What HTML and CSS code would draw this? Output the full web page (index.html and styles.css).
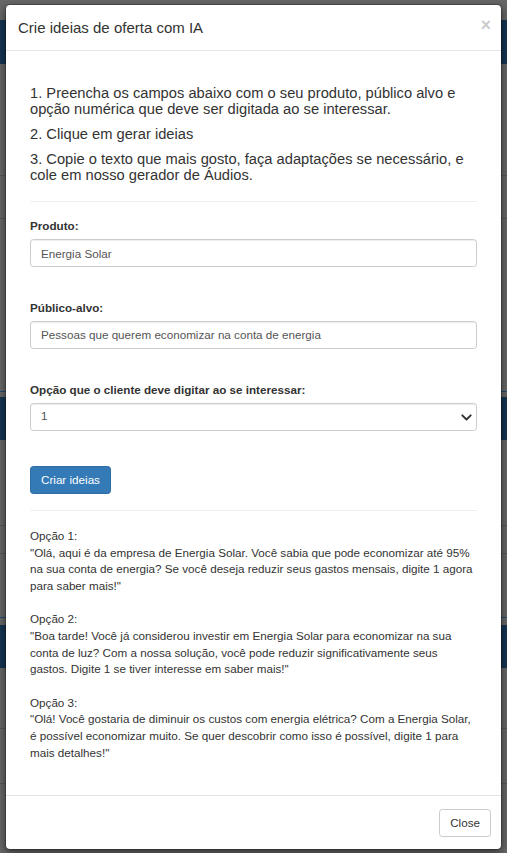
FILE: index.html
```html
<!DOCTYPE html>
<html lang="pt-BR">
<head>
<meta charset="utf-8">
<title>Crie ideias de oferta com IA</title>
<link rel="stylesheet" href="styles.css">
</head>
<body>
<div class="modal">
  <div class="modal-header">
    <h4 class="modal-title">Crie ideias de oferta com IA</h4>
    <button class="close" type="button">&times;</button>
  </div>
  <div class="modal-body">
    <h4 class="step">1. Preencha os campos abaixo com o seu produto, público alvo e opção numérica que deve ser digitada ao se interessar.</h4>
    <h4 class="step">2. Clique em gerar ideias</h4>
    <h4 class="step">3. Copie o texto que mais gosto, faça adaptações se necessário, e cole em nosso gerador de Áudios.</h4>
    <hr class="sep">
    <div class="form-group">
      <label class="label">Produto:</label>
      <input class="control" type="text" value="Energia Solar">
    </div>
    <div class="form-group">
      <label class="label">Público-alvo:</label>
      <input class="control" type="text" value="Pessoas que querem economizar na conta de energia">
    </div>
    <div class="form-group last">
      <label class="label">Opção que o cliente deve digitar ao se interessar:</label>
      <div class="select-wrap">
        <select class="control select">
          <option>1</option>
          <option>2</option>
          <option>3</option>
        </select>
        <svg class="chevron" width="11" height="7" viewBox="0 0 11 7"><path d="M1.3 1.3 L5.5 5.5 L9.7 1.3" fill="none" stroke="#333" stroke-width="1.9" stroke-linecap="round" stroke-linejoin="round"/></svg>
      </div>
    </div>
    <button class="btn btn-primary" type="button">Criar ideias</button>
    <hr class="sep">
    <div class="ideas">Opção 1:<br>"Olá, aqui é da empresa de Energia Solar. Você sabia que pode economizar até 95% na sua conta de energia? Se você deseja reduzir seus gastos mensais, digite 1 agora para saber mais!"<br><br>Opção 2:<br>"Boa tarde! Você já considerou investir em Energia Solar para economizar na sua conta de luz? Com a nossa solução, você pode reduzir significativamente seus gastos. Digite 1 se tiver interesse em saber mais!"<br><br>Opção 3:<br>"Olá! Você gostaria de diminuir os custos com energia elétrica? Com a Energia Solar, é possível economizar muito. Se quer descobrir como isso é possível, digite 1 para mais detalhes!"</div>
  </div>
  <div class="modal-footer">
    <button class="btn btn-default" type="button">Close</button>
  </div>
</div>
</body>
</html>
```
FILE: styles.css
```css
* { box-sizing: border-box; }
html, body { margin: 0; padding: 0; }
body {
  height: 853px;
  overflow: hidden;
  font-family: "Liberation Sans", Arial, Helvetica, sans-serif;
  font-size: 11.67px;
  line-height: 16.67px;
  color: #333;
  background-color: #686868;
  background-image:
    linear-gradient(to bottom,
      transparent 0, transparent 20px,
      #163552 20px, #163552 64px,
      transparent 64px, transparent 175px,
      #575757 175px, #575757 176px,
      transparent 176px, transparent 218px,
      #575757 218px, #575757 219px,
      transparent 219px, transparent 391px,
      #1f4b78 391px, #1f4b78 392px,
      transparent 392px, transparent 397px,
      #163552 397px, #163552 440px,
      transparent 440px, transparent 525px,
      #575757 525px, #575757 526px,
      transparent 526px, transparent 553px,
      #575757 553px, #575757 554px,
      transparent 554px, transparent 617px,
      #1f4b78 617px, #1f4b78 618px,
      transparent 618px, transparent 625px,
      #163552 625px, #163552 668px,
      transparent 668px, transparent 728px,
      #575757 728px, #575757 729px,
      transparent 729px, transparent 783px,
      #575757 783px, #575757 784px,
      transparent 784px);
}

.modal {
  margin: 4px 5px 0;
  background: #fff;
  border: 1px solid rgba(0, 0, 0, 0.2);
  border-radius: 5px;
  box-shadow: 0 3px 9px rgba(0, 0, 0, 0.5);
  background-clip: padding-box;
}

.modal-header {
  display: flex;
  align-items: flex-start;
  justify-content: space-between;
  padding: 12px 12px 12px 12px;
  border-bottom: 1px solid #e5e5e5;
}
.modal-title {
  margin: 0;
  font-size: 15px;
  line-height: 21px;
  font-weight: normal;
  color: #333;
}
.close {
  margin: 0 -2px 0 0;
  padding: 0;
  border: 0;
  background: transparent;
  font-family: "Liberation Sans", Arial, sans-serif;
  font-size: 17.5px;
  font-weight: bold;
  line-height: 17.5px;
  color: #000;
  opacity: 0.2;
  cursor: pointer;
}

.modal-body {
  padding: 25.4px 24px 34px;
}
.step {
  margin: 8.33px 0;
  font-size: 14.7px;
  line-height: 16.5px;
  font-weight: normal;
  color: #333;
}
.sep {
  margin: 16.67px 0;
  border: 0;
  border-top: 1px solid #eee;
  height: 0;
}

.form-group {
  margin-bottom: 33px;
}
.form-group.last {
  margin-bottom: 35px;
}
.label {
  display: block;
  margin-bottom: 4.17px;
  font-weight: bold;
  line-height: 16.67px;
}
.control {
  display: block;
  width: 100%;
  height: 28px;
  padding: 4px 10px;
  font-family: "Liberation Sans", Arial, sans-serif;
  font-size: 11.67px;
  line-height: 16.67px;
  color: #555;
  background: #fff;
  border: 1px solid #ccc;
  border-radius: 3.3px;
  box-shadow: inset 0 1px 1px rgba(0, 0, 0, 0.075);
  outline: none;
}
.select-wrap {
  position: relative;
}
.select {
  -webkit-appearance: none;
  appearance: none;
  padding-right: 28px;
}
.chevron {
  position: absolute;
  right: 5px;
  top: 11px;
  pointer-events: none;
}

.btn {
  display: inline-block;
  height: 28px;
  padding: 0 10px;
  font-family: "Liberation Sans", Arial, sans-serif;
  font-size: 11.67px;
  line-height: 26px;
  border: 1px solid transparent;
  border-radius: 3.3px;
  cursor: pointer;
  vertical-align: top;
}
.btn-primary {
  color: #fff;
  background: #337ab7;
  border-color: #2e6da4;
}
.btn-default {
  color: #333;
  background: #fff;
  border-color: #ccc;
}

.ideas {
  line-height: 16.67px;
}

.modal-footer {
  display: flex;
  justify-content: flex-end;
  padding: 12.5px 10px 12.5px;
  border-top: 1px solid #e5e5e5;
}
```
